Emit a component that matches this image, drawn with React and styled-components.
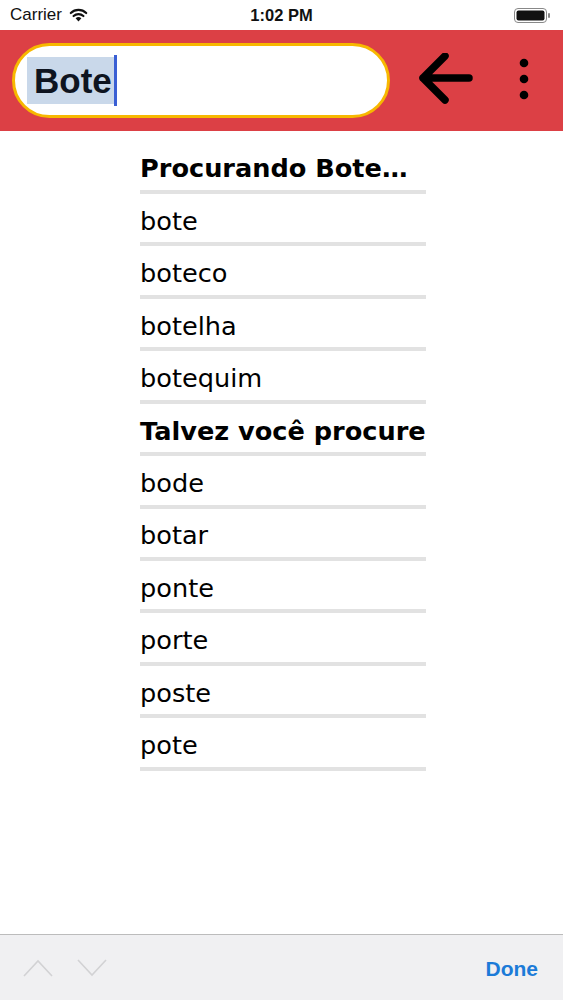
import React from 'react';
import styled, { createGlobalStyle } from 'styled-components';

const Global = createGlobalStyle`
  body {
    margin: 0;
    background: #ffffff;
  }
  * {
    box-sizing: border-box;
  }
`

const Screen = styled.div`
  display: flex;
  flex-direction: column;
  width: 563px;
  height: 1000px;
  background: #ffffff;
  overflow: hidden;
`

const StatusBar = styled.div`
  height: 30px;
  display: flex;
  align-items: center;
  justify-content: space-between;
  padding: 0 12px 0 10px;
  font-family: 'Liberation Sans', Arial, sans-serif;
  font-size: 17px;
  color: #111;
  position: relative;
`

const Carrier = styled.div`
  display: flex;
  align-items: center;
  gap: 7px;
`

const Clock = styled.div`
  position: absolute;
  left: 0;
  right: 0;
  text-align: center;
  font-weight: bold;
  font-size: 16.5px;
  pointer-events: none;
`

const Header = styled.div`
  height: 101px;
  background: #dc4045;
  display: flex;
  align-items: center;
  padding: 0 0 0 12px;
`

const SearchBox = styled.div`
  width: 378px;
  height: 75px;
  border: 3px solid #f7b800;
  border-radius: 40px;
  background: #ffffff;
  display: flex;
  align-items: center;
  padding-left: 12px;
  margin-top: -1px;
`

const Selected = styled.span`
  font-family: 'Liberation Sans', Arial, sans-serif;
  font-weight: bold;
  font-size: 35px;
  color: #0e1420;
  background: #c9d8ea;
  line-height: 47px;
  padding: 0 2px 0 7px;
`

const Caret = styled.span`
  display: inline-block;
  width: 3px;
  height: 51px;
  background: #3a5fd4;
`

const HeaderIcons = styled.div`
  display: flex;
  align-items: center;
  margin-left: 28px;
  gap: 44px;
  margin-top: -3px;
`

const List = styled.div`
  margin-left: 140px;
  width: 286px;
  padding-top: 10.5px;
`

const Row = styled.div`
  height: 52.45px;
  display: flex;
  flex-direction: column;
  justify-content: flex-end;
`

const Label = styled.div`
  font-family: 'DejaVu Sans', Verdana, sans-serif;
  font-size: 25.6px;
  line-height: 30px;
  font-weight: ${(p) => (p.bold ? 'bold' : 'normal')};
  color: #000;
  padding-bottom: 6.6px;
  white-space: nowrap;
`

const Divider = styled.div`
  height: 4px;
  background: #e2e2e2;
`

const Spacer = styled.div`
  flex: 1;
`

const Toolbar = styled.div`
  height: 66px;
  border-top: 1px solid #bcbcbc;
  background: #f0f0f2;
  display: flex;
  align-items: center;
  padding: 0 25px 0 23px;
`

const Chevrons = styled.div`
  display: flex;
  gap: 24px;
  flex: 1;
`

const Done = styled.div`
  font-family: 'Liberation Sans', Arial, sans-serif;
  font-weight: bold;
  font-size: 21px;
  color: #1c7bd8;
  margin-top: 2px;
`

const items = [
  { text: 'Procurando Bote…', bold: true },
  { text: 'bote' },
  { text: 'boteco' },
  { text: 'botelha' },
  { text: 'botequim' },
  { text: 'Talvez você procure', bold: true },
  { text: 'bode' },
  { text: 'botar' },
  { text: 'ponte' },
  { text: 'porte' },
  { text: 'poste' },
  { text: 'pote' },
]

const App = () => {
  return (
    <Screen>
      <Global />
      <StatusBar>
        <Carrier>
          Carrier
          <svg width="19" height="14" viewBox="0 0 19 14">
            <path d="M9.5 13.5 L6.6 10.2 A4.3 4.3 0 0 1 12.4 10.2 Z" fill="#111" />
            <path d="M4.6 8 A7.2 7.2 0 0 1 14.4 8" stroke="#111" strokeWidth="2.2" fill="none" strokeLinecap="round" />
            <path d="M1.8 5 A11 11 0 0 1 17.2 5" stroke="#111" strokeWidth="2.2" fill="none" strokeLinecap="round" />
          </svg>
        </Carrier>
        <Clock>1:02 PM</Clock>
        <svg width="37" height="15" viewBox="0 0 37 15">
          <rect x="0.5" y="0.5" width="32" height="14" rx="3.5" fill="none" stroke="#888" />
          <rect x="2.5" y="2.5" width="28" height="10" rx="2" fill="#111" />
          <rect x="34" y="5" width="2" height="5" rx="1" fill="#888" />
        </svg>
      </StatusBar>
      <Header>
        <SearchBox>
          <Selected>Bote</Selected>
          <Caret />
        </SearchBox>
        <HeaderIcons>
          <svg width="56" height="52" viewBox="0 0 56 52">
            <path d="M51 25 H5 M27 3 L5 25 L27 47" stroke="#000" strokeWidth="7.5" fill="none" strokeLinecap="round" strokeLinejoin="round" />
          </svg>
          <svg width="12" height="42" viewBox="0 0 12 42">
            <circle cx="6" cy="5" r="4.3" fill="#000" />
            <circle cx="6" cy="21" r="4.3" fill="#000" />
            <circle cx="6" cy="37" r="4.3" fill="#000" />
          </svg>
        </HeaderIcons>
      </Header>
      <List>
        {items.map((it) => (
          <Row key={it.text}>
            <Label bold={it.bold}>{it.text}</Label>
            <Divider />
          </Row>
        ))}
      </List>
      <Spacer />
      <Toolbar>
        <Chevrons>
          <svg width="30" height="18" viewBox="0 0 30 18">
            <path d="M1 17 L15 2 L29 17" stroke="#d2d2d4" strokeWidth="1.6" fill="none" />
          </svg>
          <svg width="30" height="18" viewBox="0 0 30 18">
            <path d="M1 1 L15 16 L29 1" stroke="#d2d2d4" strokeWidth="1.6" fill="none" />
          </svg>
        </Chevrons>
        <Done>Done</Done>
      </Toolbar>
    </Screen>
  );
};

export default App;
